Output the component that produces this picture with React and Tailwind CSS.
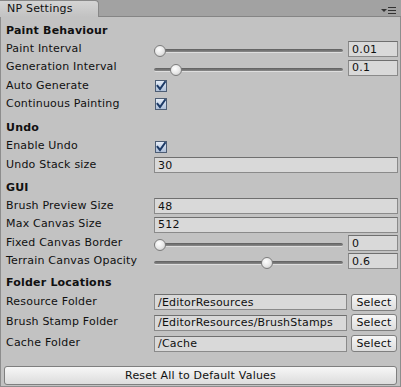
import React from "react";

const Label = ({ children }) => (
  <div className="w-[153px] pl-[5px] whitespace-nowrap">{children}</div>
);

const Header = ({ children, cls }) => (
  <div className={`flex items-center h-[18px] pl-[5px] font-bold ${cls || ""}`}>{children}</div>
);

const Field = ({ value, cls }) => (
  <div
    className={`h-[16px] bg-[#d9d9d9] border border-[#8a8a8a] border-t-[#6f6f6f] pl-[3px] flex items-center leading-none ${cls || ""}`}
  >
    {value}
  </div>
);

const Slider = ({ frac, value }) => (
  <div className="flex-1 flex items-center gap-[5px]">
    <div className="flex-1 relative h-[16px]">
      <div className="absolute left-0 right-0 top-[8px] h-[4px] rounded-full bg-[linear-gradient(#5e5e5e,#8a8a8a)] border-b border-[#dedede]" />
      <div
        className="absolute top-[4px] w-[12px] h-[12px] rounded-full border border-[#7d7d7d] bg-[radial-gradient(circle_at_40%_35%,#ffffff,#e6e6e6_55%,#bdbdbd)]"
        style={{ left: `${frac * 176}px` }}
      />
    </div>
    <Field value={value} cls="w-[50px]" />
  </div>
);

const Check = () => (
  <div className="ml-[1px] w-[12px] h-[12px] border border-[#4d5d74] bg-[linear-gradient(#e4ecf7,#aebfd8)] flex items-center justify-center">
    <svg width="10" height="10" viewBox="0 0 10 10">
      <path d="M1.5 5 L4 8 L9 1" fill="none" stroke="#1c3a66" strokeWidth="2" strokeLinecap="square" />
    </svg>
  </div>
);

const Row = ({ label, children, h = "h-[18px]" }) => (
  <div className={`flex items-center ${h}`}>
    <Label>{label}</Label>
    <div className="flex-1 flex items-center pr-[2px]">{children}</div>
  </div>
);

const Button = ({ children, cls }) => (
  <div
    className={`h-[17px] border border-[#7f7f7f] rounded-[3px] bg-[linear-gradient(#f7f7f7,#dcdcdc)] flex items-center justify-center leading-none ${cls || ""}`}
  >
    {children}
  </div>
);

export default function App() {
  return (
    <div className="w-[401px] h-[387px] bg-[#a2a2a2] flex flex-col font-['DejaVu_Sans',sans-serif] text-[11px] tracking-[0.2px] text-[#101010]">
      <div className="h-[17px] flex items-end justify-between border-b border-[#858585] relative">
        <div className="w-[99px] h-[17px] -mb-px bg-[linear-gradient(#d4d4d4,#c2c2c2)] border-t border-r border-[#888] rounded-tr-[4px] pl-[7px] flex items-center">
          NP Settings
        </div>
        <div className="flex items-center gap-[1px] pr-[5px] pb-[2px]">
          <svg width="6" height="4" viewBox="0 0 6 4"><path d="M0 0 H6 L3 3 Z" fill="#333" /></svg>
          <svg width="8" height="7" viewBox="0 0 8 7">
            <rect x="0" y="0" width="8" height="1" fill="#333" />
            <rect x="0" y="3" width="8" height="1" fill="#333" />
            <rect x="0" y="6" width="8" height="1" fill="#333" />
          </svg>
        </div>
      </div>
      <div className="flex-1 bg-[#c2c2c2] border-x border-b border-[#8d8d8d] flex flex-col pt-[5px]">
        <Header>Paint Behaviour</Header>
        <Row label="Paint Interval"><Slider frac={0} value="0.01" /></Row>
        <Row label="Generation Interval" h="h-[19px]"><Slider frac={0.09} value="0.1" /></Row>
        <Row label="Auto Generate"><Check /></Row>
        <Row label="Continuous Painting"><Check /></Row>
        <Header cls="mt-[6px]">Undo</Header>
        <Row label="Enable Undo" h="h-[19px]"><Check /></Row>
        <Row label="Undo Stack size"><Field value="30" cls="flex-1" /></Row>
        <Header cls="mt-[5px]">GUI</Header>
        <Row label="Brush Preview Size"><Field value="48" cls="flex-1" /></Row>
        <Row label="Max Canvas Size" h="h-[19px]"><Field value="512" cls="flex-1" /></Row>
        <Row label="Fixed Canvas Border"><Slider frac={0} value="0" /></Row>
        <Row label="Terrain Canvas Opacity"><Slider frac={0.61} value="0.6" /></Row>
        <Header cls="mt-[4px]">Folder Locations</Header>
        <Row label="Resource Folder" h="h-[20px]">
          <Field value="/EditorResources" cls="flex-1" />
          <Button cls="w-[46px] ml-[4px] mr-[1px]">Select</Button>
        </Row>
        <Row label="Brush Stamp Folder" h="h-[21px]">
          <Field value="/EditorResources/BrushStamps" cls="flex-1" />
          <Button cls="w-[46px] ml-[4px] mr-[1px]">Select</Button>
        </Row>
        <Row label="Cache Folder" h="h-[21px]">
          <Field value="/Cache" cls="flex-1" />
          <Button cls="w-[46px] ml-[4px] mr-[1px]">Select</Button>
        </Row>
        <div className="mt-auto px-[3px] pb-[1px]">
          <Button cls="h-[19px]">Reset All to Default Values</Button>
        </div>
      </div>
    </div>
  );
}
